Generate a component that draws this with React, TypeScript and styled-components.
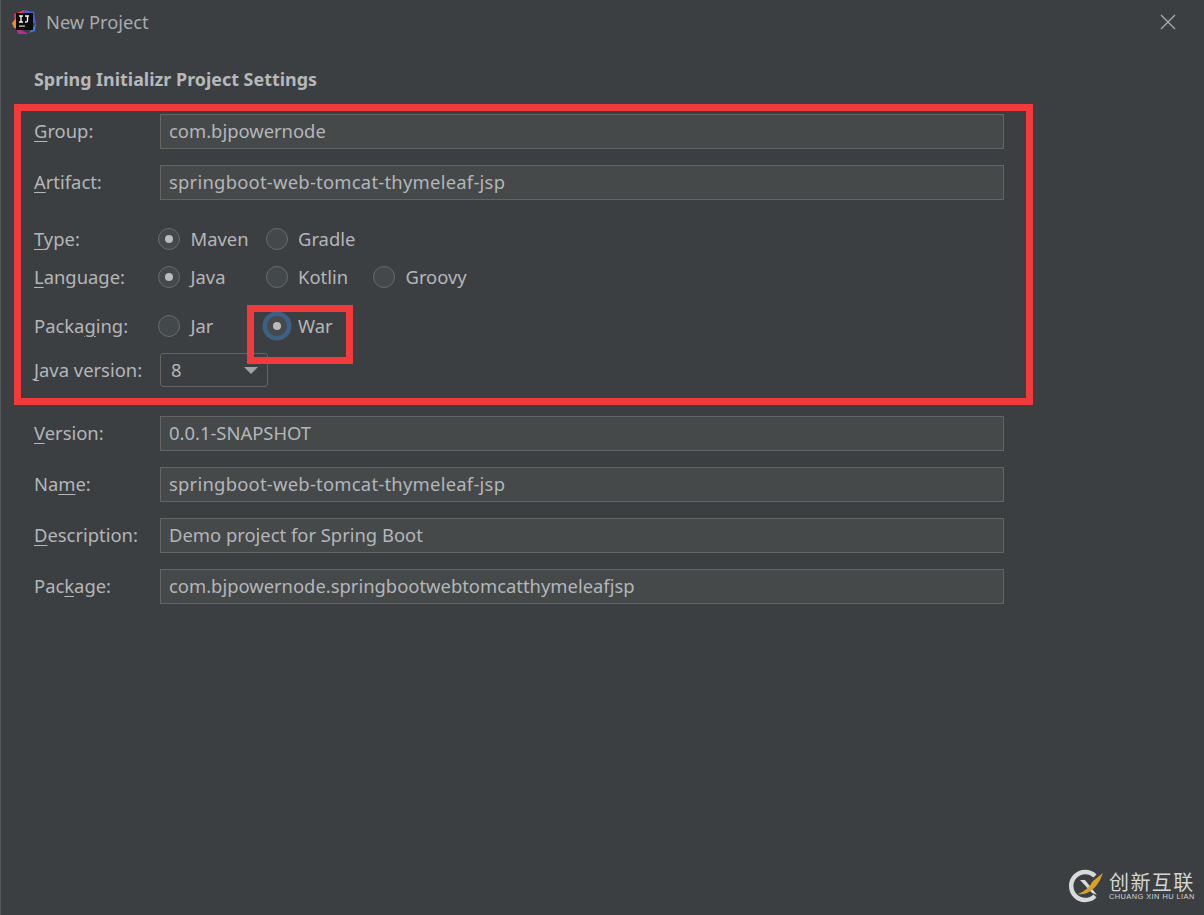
import React from 'react';
import styled, { createGlobalStyle } from 'styled-components';

const GlobalStyle = createGlobalStyle`
  html, body {
    margin: 0;
    padding: 0;
    background: #3c3f41;
  }
  * {
    box-sizing: border-box;
  }
`;

const Dialog = styled.div`
  position: relative;
  width: 1204px;
  height: 915px;
  overflow: hidden;
  background: #3c3f41;
  border-left: 1px solid #555759;
  color: #b4b6b8;
  font-family: 'Noto Sans', 'Open Sans', sans-serif;
  font-size: 18.4px;
`;

const TitleBar = styled.header`
  display: flex;
  align-items: center;
  height: 44px;
  padding: 0 27px 0 10px;
`;

const TitleText = styled.span`
  margin: 0 0 2px 9px;
  font-size: 18.3px;
  color: #a9abad;
  flex: 1;
`;

const Heading = styled.h2`
  margin: 23px 0 0 33px;
  height: 24px;
  font-size: 17.9px;
  line-height: 24px;
  font-weight: 700;
  color: #b6b8ba;
`;

const Form = styled.form`
  display: flex;
  flex-direction: column;
  padding: 23px 0 0 33px;
`;

const Row = styled.div<{ $top: number }>`
  display: flex;
  align-items: center;
  min-height: 34px;
  margin-top: ${p => p.$top}px;
`;

const Label = styled.label<{ $lift?: number }>`
  width: 126px;
  flex: none;
  line-height: 24px;
  padding-bottom: ${p => p.$lift ?? 2}px;
  u {
    text-underline-offset: 3px;
    text-decoration-thickness: 1px;
  }
`;

const TextField = styled.div<{ $tracking?: number }>`
  width: 844px;
  height: 35px;
  padding: 0 8px;
  background: #45494a;
  border: 1px solid #646464;
  line-height: 32px;
  white-space: nowrap;
  letter-spacing: ${p => p.$tracking ?? 0}px;
  color: #b4b6b8;
`;

const RadioGroup = styled.div`
  display: flex;
  margin-left: -2px;
`;

const RadioOption = styled.div`
  display: flex;
  align-items: center;
  width: 107.5px;
`;

const RadioText = styled.span`
  margin: 0 0 1px 0.5px;
  line-height: 24px;
`;

const RadioCircle = styled.span<{ $checked?: boolean; $focused?: boolean }>`
  position: relative;
  display: block;
  flex: none;
  width: 22px;
  height: 22px;
  margin-right: 10px;
  border-radius: 50%;
  background: #43494a;
  border: 1.5px solid #686a6c;
  box-shadow: ${p => (p.$focused ? '0 0 0 3.5px #3d6185' : 'none')};
  ${p => p.$focused && 'border-color: #3d6185; background: #45494b;'}
  &::after {
    content: '';
    display: ${p => (p.$checked ? 'block' : 'none')};
    position: absolute;
    left: 50%;
    top: 50%;
    width: 8px;
    height: 8px;
    margin: -4px 0 0 -4px;
    border-radius: 50%;
    background: #bbbbbb;
  }
`;

const Select = styled.div`
  display: flex;
  align-items: center;
  justify-content: space-between;
  width: 108px;
  height: 34px;
  padding: 0 9px 2px 10px;
  border: 1px solid #646464;
  border-radius: 3px;
  background: #3c3f41;
`;

const Caret = styled.span`
  width: 0;
  height: 0;
  margin-top: 2px;
  border-left: 7px solid transparent;
  border-right: 7px solid transparent;
  border-top: 7px solid #a0a2a4;
`;

const Highlight = styled.div<{ $x: number; $y: number; $w: number; $h: number }>`
  position: absolute;
  left: ${p => p.$x - 1}px;
  top: ${p => p.$y}px;
  width: ${p => p.$w}px;
  height: ${p => p.$h}px;
  border: 7px solid #f23a3c;
  pointer-events: none;
`;

const Watermark = styled.div`
  position: absolute;
  left: 1067px;
  top: 868px;
  display: flex;
  align-items: center;
  gap: 5px;
`;

const WatermarkText = styled.div`
  display: flex;
  flex-direction: column;
  color: #d4d6d6;
`;

const WatermarkName = styled.span`
  font-family: 'Noto Sans CJK SC', sans-serif;
  font-size: 20px;
  line-height: 21px;
  letter-spacing: 1.4px;
`;

const WatermarkSub = styled.span`
  font-family: 'Liberation Sans', sans-serif;
  font-size: 7.4px;
  line-height: 9px;
  letter-spacing: 0.45px;
  white-space: nowrap;
`;

const AppLogo = () => (
  <svg width="26" height="26" viewBox="0 0 26 26">
    <path d="M3 5 L13 1 L14 8 L4 14 Z" fill="#e8315f" />
    <path d="M13 1 L23 3 L25 15 L15 10 Z" fill="#4a5fd8" />
    <path d="M1 14 L6 8 L9 20 L3 19 Z" fill="#f58a25" />
    <path d="M5 19 L12 22 L18 25 L7 25 Z" fill="#b62a9c" />
    <path d="M18 24 L25 14 L24 22 Z" fill="#3a7be0" />
    <rect x="5" y="4" width="17" height="17" fill="#0b0b0e" />
    <path d="M8 7 H12 M10 7 V13 M8 13 H12 M14 7 H18 M16.5 7 V12 Q16.5 13 15 13 H14" stroke="#f2f2f2" strokeWidth="1.4" fill="none" />
    <rect x="8" y="16.5" width="6" height="1.2" fill="#d8d8d8" />
  </svg>
);

const CloseIcon = () => (
  <svg width="18" height="18" viewBox="0 0 18 18">
    <path d="M2 2 L16 16 M16 2 L2 16" stroke="#a8aaac" strokeWidth="1.4" />
  </svg>
);

const WatermarkLogo = () => (
  <svg width="36" height="36" viewBox="0 0 36 36">
    <path d="M27 8 A14 14 0 1 0 27 28" stroke="#d8dada" strokeWidth="4.5" fill="none" />
    <path d="M12 12 L24 25 L29 27 L17 12 Z" fill="#d8dada" />
    <path d="M10 26 Q20 22 25 13 L35 5 Q30 20 19 25 Q14 27 10 26 Z" fill="#d9a028" />
  </svg>
);

const Field = ({ label, value, top, tracking }: { label: React.ReactNode; value: string; top: number; tracking?: number }) => (
  <Row $top={top}>
    <Label>{label}</Label>
    <TextField $tracking={tracking}>{value}</TextField>
  </Row>
);

const Radio = ({ text, checked, focused }: { text: string; checked?: boolean; focused?: boolean }) => (
  <RadioOption>
    <RadioCircle $checked={checked} $focused={focused} />
    <RadioText>{text}</RadioText>
  </RadioOption>
);

const App: React.FC = () => (
  <Dialog>
    <GlobalStyle />
    <TitleBar>
      <AppLogo />
      <TitleText>New Project</TitleText>
      <CloseIcon />
    </TitleBar>
    <Heading>Spring Initializr Project Settings</Heading>
    <Form>
      <Field top={0} label={<><u>G</u>roup:</>} value="com.bjpowernode" />
      <Field top={16} label={<><u>A</u>rtifact:</>} value="springboot-web-tomcat-thymeleaf-jsp" tracking={0.25} />
      <Row $top={22}>
        <Label $lift={0}><u>T</u>ype:</Label>
        <RadioGroup>
          <Radio text="Maven" checked />
          <Radio text="Gradle" />
        </RadioGroup>
      </Row>
      <Row $top={4}>
        <Label $lift={0}><u>L</u>anguage:</Label>
        <RadioGroup>
          <Radio text="Java" checked />
          <Radio text="Kotlin" />
          <Radio text="Groovy" />
        </RadioGroup>
      </Row>
      <Row $top={15}>
        <Label $lift={0}>Packa<u>g</u>ing:</Label>
        <RadioGroup>
          <Radio text="Jar" />
          <Radio text="War" checked focused />
        </RadioGroup>
      </Row>
      <Row $top={10}>
        <Label $lift={0}><u>J</u>ava version:</Label>
        <Select>
          8
          <Caret />
        </Select>
      </Row>
      <Field top={29} label={<><u>V</u>ersion:</>} value="0.0.1-SNAPSHOT" />
      <Field top={16} label={<>Na<u>m</u>e:</>} value="springboot-web-tomcat-thymeleaf-jsp" tracking={0.25} />
      <Field top={16} label={<><u>D</u>escription:</>} value="Demo project for Spring Boot" />
      <Field top={16} label={<>Pac<u>k</u>age:</>} value="com.bjpowernode.springbootwebtomcatthymeleafjsp" />
    </Form>
    <Highlight $x={14} $y={104} $w={1019} $h={301} />
    <Highlight $x={247} $y={305} $w={106} $h={59} />
    <Watermark>
      <WatermarkLogo />
      <WatermarkText>
        <WatermarkName>创新互联</WatermarkName>
        <WatermarkSub>CHUANG XIN HU LIAN</WatermarkSub>
      </WatermarkText>
    </Watermark>
  </Dialog>
);

export default App;
